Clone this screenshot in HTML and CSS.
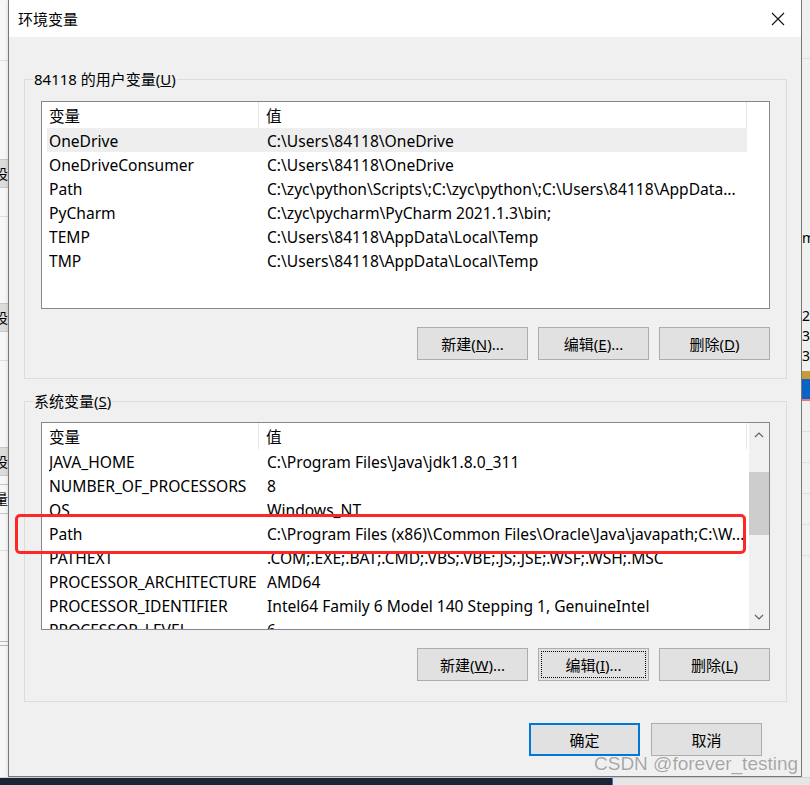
FILE: index.html
```
<!DOCTYPE html>
<html lang="zh-CN">
<head>
  <meta charset="UTF-8" />
  <title>环境变量</title>
  <link rel="stylesheet" href="styles.css">
</head>
<body>
  <div class="screen">
    <div class="main">
      <div class="side side-left">
        <div class="bg-line" style="margin-top: 60px"></div>
        <div class="bg-btn" style="margin-top: 98px">设置</div>
        <div class="bg-line" style="margin-top: 28px"></div>
        <div class="bg-btn" style="margin-top: 86px">设置</div>
        <div class="bg-line" style="margin-top: 28px"></div>
        <div class="bg-btn" style="margin-top: 86px">设置</div>
        <div class="bg-plain" style="margin-top: 8px">量</div>
        <div class="bg-line" style="margin-top: 36px"></div>
        <div class="bg-rule" style="margin-top: 90px"></div>
      </div>

      <div class="dialog">
        <div class="titlebar">
          <span class="title">环境变量</span>
          <span class="close">
            <svg width="14" height="14" viewBox="0 0 14 14"><path d="M1 1L13 13M13 1L1 13" stroke="#111" stroke-width="1.1" fill="none"/></svg>
          </span>
        </div>

        <div class="dialog-body">
          <fieldset class="group">
            <legend>84118 的用户变量(<u>U</u>)</legend>
            <div class="list">
              <div class="list-main">
                <div class="list-head">
                  <div class="hcell">变量</div>
                  <div class="hcell">值</div>
                </div>
                <div class="row selected"><span>OneDrive</span><span>C:\Users\84118\OneDrive</span></div>
                <div class="row"><span>OneDriveConsumer</span><span>C:\Users\84118\OneDrive</span></div>
                <div class="row"><span>Path</span><span>C:\zyc\python\Scripts\;C:\zyc\python\;C:\Users\84118\AppData...</span></div>
                <div class="row"><span>PyCharm</span><span>C:\zyc\pycharm\PyCharm 2021.1.3\bin;</span></div>
                <div class="row"><span>TEMP</span><span>C:\Users\84118\AppData\Local\Temp</span></div>
                <div class="row"><span>TMP</span><span>C:\Users\84118\AppData\Local\Temp</span></div>
              </div>
            </div>
            <div class="btn-row">
              <button class="btn">新建(<u>N</u>)...</button>
              <button class="btn">编辑(<u>E</u>)...</button>
              <button class="btn">删除(<u>D</u>)</button>
            </div>
          </fieldset>

          <fieldset class="group group-system">
            <legend>系统变量(<u>S</u>)</legend>
            <div class="list">
              <div class="list-main">
                <div class="list-head">
                  <div class="hcell">变量</div>
                  <div class="hcell">值</div>
                </div>
                <div class="row"><span>JAVA_HOME</span><span>C:\Program Files\Java\jdk1.8.0_311</span></div>
                <div class="row"><span>NUMBER_OF_PROCESSORS</span><span>8</span></div>
                <div class="row"><span>OS</span><span>Windows_NT</span></div>
                <div class="row"><span>Path</span><span>C:\Program Files (x86)\Common Files\Oracle\Java\javapath;C:\W...</span></div>
                <div class="row"><span>PATHEXT</span><span>.COM;.EXE;.BAT;.CMD;.VBS;.VBE;.JS;.JSE;.WSF;.WSH;.MSC</span></div>
                <div class="row"><span>PROCESSOR_ARCHITECTURE</span><span>AMD64</span></div>
                <div class="row"><span>PROCESSOR_IDENTIFIER</span><span>Intel64 Family 6 Model 140 Stepping 1, GenuineIntel</span></div>
                <div class="row"><span>PROCESSOR_LEVEL</span><span>6</span></div>
              </div>
              <div class="scrollbar">
                <svg class="arrow" width="20" height="24" viewBox="0 0 20 24"><path d="M6 14L10 10L14 14" stroke="#606060" stroke-width="1.2" fill="none"/></svg>
                <div class="track"><div class="thumb"></div></div>
                <svg class="arrow" width="20" height="24" viewBox="0 0 20 24"><path d="M6 10L10 14L14 10" stroke="#606060" stroke-width="1.2" fill="none"/></svg>
              </div>
            </div>
            <div class="btn-row">
              <button class="btn">新建(<u>W</u>)...</button>
              <button class="btn focused">编辑(<u>I</u>)...</button>
              <button class="btn">删除(<u>L</u>)</button>
            </div>
          </fieldset>

          <div class="actions">
            <button class="btn btn-default">确定</button>
            <button class="btn">取消</button>
          </div>
        </div>
      </div>

      <div class="side side-right">
        <div class="bg-line" style="margin-top: 58px"></div>
        <div class="bg-text" style="margin-top: 170px">m</div>
        <div class="bg-text" style="margin-top: 60px">2\</div>
        <div class="bg-text" style="margin-top: 2px">3</div>
        <div class="bg-text" style="margin-top: 2px">3</div>
        <div class="bg-gold" style="margin-top: 6px"></div>
        <div class="bg-blue"></div>
        <div class="bg-line" style="margin-top: 30px"></div>
        <div class="bg-line" style="margin-top: 30px"></div>
        <div class="bg-line" style="margin-top: 30px"></div>
        <div class="bg-line" style="margin-top: 30px"></div>
        <div class="bg-line" style="margin-top: 30px"></div>
      </div>
    </div>
    <div class="taskbar">
      <div class="taskbar-dark"></div>
      <div class="taskbar-light"></div>
    </div>

    <div class="highlight"></div>
    <div class="watermark">CSDN @forever_testing</div>
  </div>
</body>
</html>
```

FILE: styles.css
```
body {
  margin: 0;
  font-family: 'Noto Sans', 'Noto Sans CJK SC', sans-serif;
  font-size: 15px;
  color: #000;
  background: #f0f0f0;
}

.screen {
  position: relative;
  width: 810px;
  height: 785px;
  overflow: hidden;
}

.main {
  display: flex;
  height: 777px;
}

/* windows behind the dialog */
.side {
  width: 8px;
  background: #f7f7f7;
  display: flex;
  flex-direction: column;
  overflow: hidden;
  font-size: 14px;
}

.bg-line {
  height: 1px;
  background: #dedede;
}

.bg-btn {
  height: 27px;
  line-height: 27px;
  background: #dcdcdc;
  border-top: 1px solid #c8c8c8;
  border-bottom: 1px solid #c8c8c8;
  white-space: nowrap;
  text-indent: -6px;
}

.bg-plain {
  height: 28px;
  line-height: 28px;
  border-top: 1px solid #c8c8c8;
  border-bottom: 1px solid #c8c8c8;
  white-space: nowrap;
  text-indent: -6px;
}

.bg-rule {
  height: 3px;
  border-top: 1px solid #b8b8b8;
  border-bottom: 1px solid #b8b8b8;
}

.side-right {
  background: #f0f0f0;
}

.bg-text {
  line-height: 18px;
  white-space: nowrap;
}

.bg-gold {
  height: 8px;
  background: #c89a3a;
}

.bg-blue {
  height: 20px;
  background: #0a64c4;
  border-bottom: 2px solid #f27272;
}

/* dialog */
.dialog {
  width: 792px;
  display: flex;
  flex-direction: column;
  border: 1px solid #777;
  border-top: none;
  box-shadow: 0 0 4px rgba(0,0,0,0.15);
}

.titlebar {
  height: 37px;
  background: #fff;
  display: flex;
  align-items: center;
  justify-content: space-between;
  padding-left: 9px;
}

.title {
  line-height: 20px;
}

.close {
  width: 46px;
  height: 37px;
  display: flex;
  align-items: center;
  justify-content: center;
}

.dialog-body {
  flex: 1;
  background: #f0f0f0;
  padding: 0 14px 0 15px;
  display: flex;
  flex-direction: column;
}

.group {
  margin: 32px 0 0;
  padding: 12px 16px 18px;
  border: 1px solid #dcdcdc;
  min-width: 0;
}

.group legend {
  margin-left: -8px;
  padding: 0 1px;
  line-height: 20px;
}

.group-system {
  margin-top: 12px;
  padding-top: 11px;
  padding-bottom: 20px;
}

.list {
  height: 206px;
  border: 1px solid #828790;
  background: #fff;
  display: flex;
  overflow: hidden;
  font-size: 15.6px;
}

.list-main {
  width: 706px;
}

.list-head {
  display: grid;
  grid-template-columns: 217px 488px;
  height: 26px;
}

.hcell {
  padding: 3px 0 0 7px;
  line-height: 22px;
  border-right: 1px solid #e5e5e5;
}

.row {
  display: grid;
  grid-template-columns: 218px 1fr;
  margin-left: 5px;
  width: 698px;
  padding: 1px 0 0 2px;
  height: 23px;
  line-height: 24px;
  white-space: nowrap;
}

.row span {
  overflow: hidden;
}

.row.selected {
  background: #eeeeee;
}

.scrollbar {
  width: 20px;
  margin-left: 1px;
  background: #f0f0f0;
  display: flex;
  flex-direction: column;
}

.arrow {
  display: block;
}

.track {
  flex: 1;
  padding-top: 25px;
}

.thumb {
  height: 63px;
  background: #cdcdcd;
}

.btn-row {
  display: flex;
  justify-content: flex-end;
  gap: 10px;
  margin-top: 18px;
}

.btn {
  width: 111px;
  height: 33px;
  padding: 0;
  font: inherit;
  line-height: 20px;
  color: #000;
  background: #e1e1e1;
  border: 1px solid #adadad;
}

.btn.focused {
  outline: 1px dotted #000;
  outline-offset: -4px;
}

.btn-default {
  border: 2px solid #0078d7;
}

.actions {
  display: flex;
  justify-content: flex-end;
  gap: 11px;
  margin-top: 21px;
  padding-right: 25px;
}

.taskbar {
  display: flex;
  height: 8px;
  border-top: 1px solid #d6d6d6;
}

.taskbar-dark {
  width: 612px;
  background: #1c2535;
  border-right: 1px solid #3a78c0;
}

.taskbar-light {
  flex: 1;
  background: #e6e6e6;
}

/* annotation and watermark drawn over the screenshot */
.highlight {
  position: absolute;
  left: 15px;
  top: 514px;
  width: 725px;
  height: 34px;
  border: 3.5px solid #ff2626;
  border-radius: 5px;
}

.watermark {
  position: absolute;
  left: 594px;
  top: 753px;
  font-family: 'Liberation Sans', sans-serif;
  font-size: 19px;
  color: rgba(150, 150, 150, 0.85);
  text-shadow: 0 0 1px #fff;
  white-space: nowrap;
}
```
